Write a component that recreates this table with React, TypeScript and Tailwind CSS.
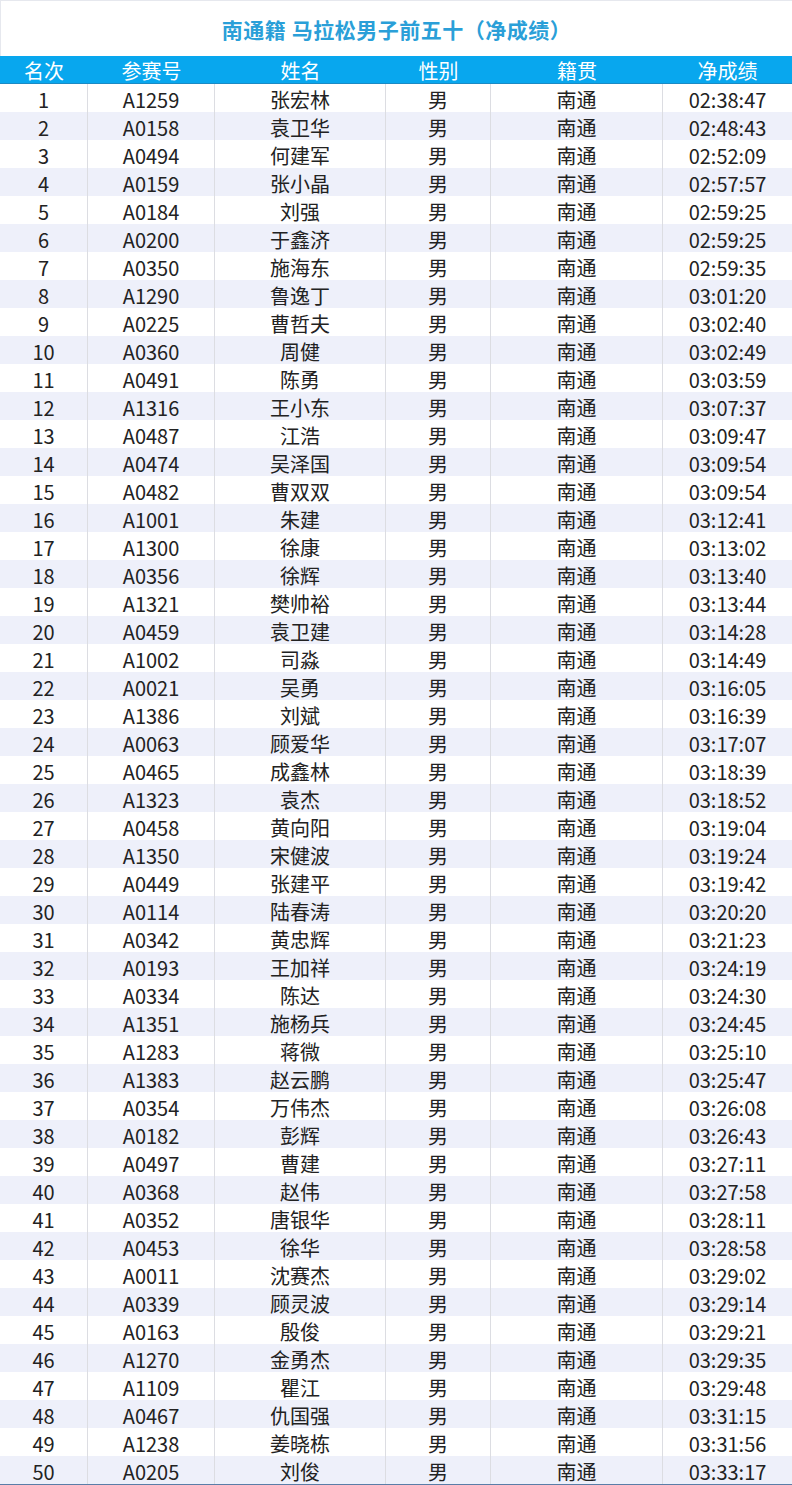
const rows: [string, string, string][] = [
  ["A1259", "张宏林", "02:38:47"],
  ["A0158", "袁卫华", "02:48:43"],
  ["A0494", "何建军", "02:52:09"],
  ["A0159", "张小晶", "02:57:57"],
  ["A0184", "刘强", "02:59:25"],
  ["A0200", "于鑫济", "02:59:25"],
  ["A0350", "施海东", "02:59:35"],
  ["A1290", "鲁逸丁", "03:01:20"],
  ["A0225", "曹哲夫", "03:02:40"],
  ["A0360", "周健", "03:02:49"],
  ["A0491", "陈勇", "03:03:59"],
  ["A1316", "王小东", "03:07:37"],
  ["A0487", "江浩", "03:09:47"],
  ["A0474", "吴泽国", "03:09:54"],
  ["A0482", "曹双双", "03:09:54"],
  ["A1001", "朱建", "03:12:41"],
  ["A1300", "徐康", "03:13:02"],
  ["A0356", "徐辉", "03:13:40"],
  ["A1321", "樊帅裕", "03:13:44"],
  ["A0459", "袁卫建", "03:14:28"],
  ["A1002", "司淼", "03:14:49"],
  ["A0021", "吴勇", "03:16:05"],
  ["A1386", "刘斌", "03:16:39"],
  ["A0063", "顾爱华", "03:17:07"],
  ["A0465", "成鑫林", "03:18:39"],
  ["A1323", "袁杰", "03:18:52"],
  ["A0458", "黄向阳", "03:19:04"],
  ["A1350", "宋健波", "03:19:24"],
  ["A0449", "张建平", "03:19:42"],
  ["A0114", "陆春涛", "03:20:20"],
  ["A0342", "黄忠辉", "03:21:23"],
  ["A0193", "王加祥", "03:24:19"],
  ["A0334", "陈达", "03:24:30"],
  ["A1351", "施杨兵", "03:24:45"],
  ["A1283", "蒋微", "03:25:10"],
  ["A1383", "赵云鹏", "03:25:47"],
  ["A0354", "万伟杰", "03:26:08"],
  ["A0182", "彭辉", "03:26:43"],
  ["A0497", "曹建", "03:27:11"],
  ["A0368", "赵伟", "03:27:58"],
  ["A0352", "唐银华", "03:28:11"],
  ["A0453", "徐华", "03:28:58"],
  ["A0011", "沈赛杰", "03:29:02"],
  ["A0339", "顾灵波", "03:29:14"],
  ["A0163", "殷俊", "03:29:21"],
  ["A1270", "金勇杰", "03:29:35"],
  ["A1109", "瞿江", "03:29:48"],
  ["A0467", "仇国强", "03:31:15"],
  ["A1238", "姜晓栋", "03:31:56"],
  ["A0205", "刘俊", "03:33:17"],
];

const cols = "grid grid-cols-[88px_127px_171px_105px_172px_129px]";
const headers = ["名次", "参赛号", "姓名", "性别", "籍贯", "净成绩"];

// body cell: 28px tall, text sits a bit low like the sheet export
const cell = "h-[28px] pt-[3px] text-center leading-[25px] border-r border-[#dcdde2]";

export default function App() {
  return (
    <div
      className="w-[792px] h-[1485px] bg-white text-[#222] overflow-hidden"
      style={{ fontFamily: '"Noto Sans CJK SC", "Noto Sans", sans-serif' }}
    >
      <div className="h-[56px] border-t border-l border-[#e6e8ee] flex items-center justify-center pt-[3px]">
        <h1 className="text-[21px] font-bold text-[#2a9fd8] tracking-[0.5px]">
          南通籍 马拉松男子前五十（净成绩）
        </h1>
      </div>

      <div className={`${cols} h-[28px] bg-[#08a7ee] border-b border-[#1b8ac4] text-white text-[20px] leading-[27px]`}>
        {headers.map((h) => (
          <div key={h} className="text-center pt-[1px]">{h}</div>
        ))}
      </div>

      {rows.map(([no, name, time], i) => (
        <div
          key={no}
          className={`${cols} h-[28px] text-[20px] ${i % 2 === 1 ? "bg-[#eef0fa]" : "bg-white"}`}
        >
          <div className={cell}>{i + 1}</div>
          <div className={cell}>{no}</div>
          <div className={cell}>{name}</div>
          <div className={cell}>男</div>
          <div className={cell}>南通</div>
          <div className="h-[28px] pt-[3px] text-center leading-[25px]">{time}</div>
        </div>
      ))}
      <div className="h-[2px] bg-[#5a7ea8]" />
    </div>
  );
}
